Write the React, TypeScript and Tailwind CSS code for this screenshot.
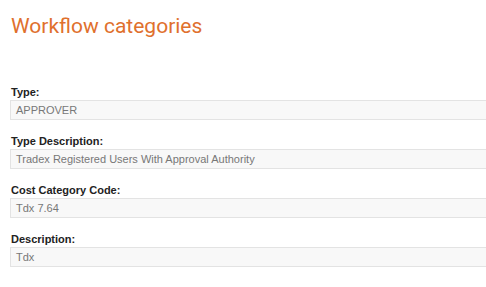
import React from "react";

const fields = [
  { label: "Type:", value: "APPROVER" },
  { label: "Type Description:", value: "Tradex Registered Users With Approval Authority" },
  { label: "Cost Category Code:", value: "Tdx 7.64" },
  { label: "Description:", value: "Tdx" },
];

export default function App() {
  return (
    <div className="w-[486px] h-[287px] overflow-hidden bg-white">
      <h1
        className="pl-[11px] pt-[13px] text-[21px] leading-[26px] text-[#e0702d] font-normal"
        style={{ fontFamily: "Roboto, 'Liberation Sans', sans-serif" }}
      >
        Workflow categories
      </h1>
      <div
        className="pl-[10px] pt-[46px] flex flex-col"
        style={{ fontFamily: "'Liberation Sans', Arial, sans-serif" }}
      >
        {fields.map((f) => (
          <div key={f.label} className="flex flex-col mb-[14px]">
            <div className="pl-[1px] text-[11px] leading-[14px] font-bold text-[#222] mb-[1px]">
              {f.label}
            </div>
            <div className="w-[500px] h-[20px] border border-[#e3e3e3] bg-[#f8f8f8] pl-[5px] text-[11px] leading-[18px] text-[#777] whitespace-nowrap">
              {f.value}
            </div>
          </div>
        ))}
      </div>
    </div>
  );
}
